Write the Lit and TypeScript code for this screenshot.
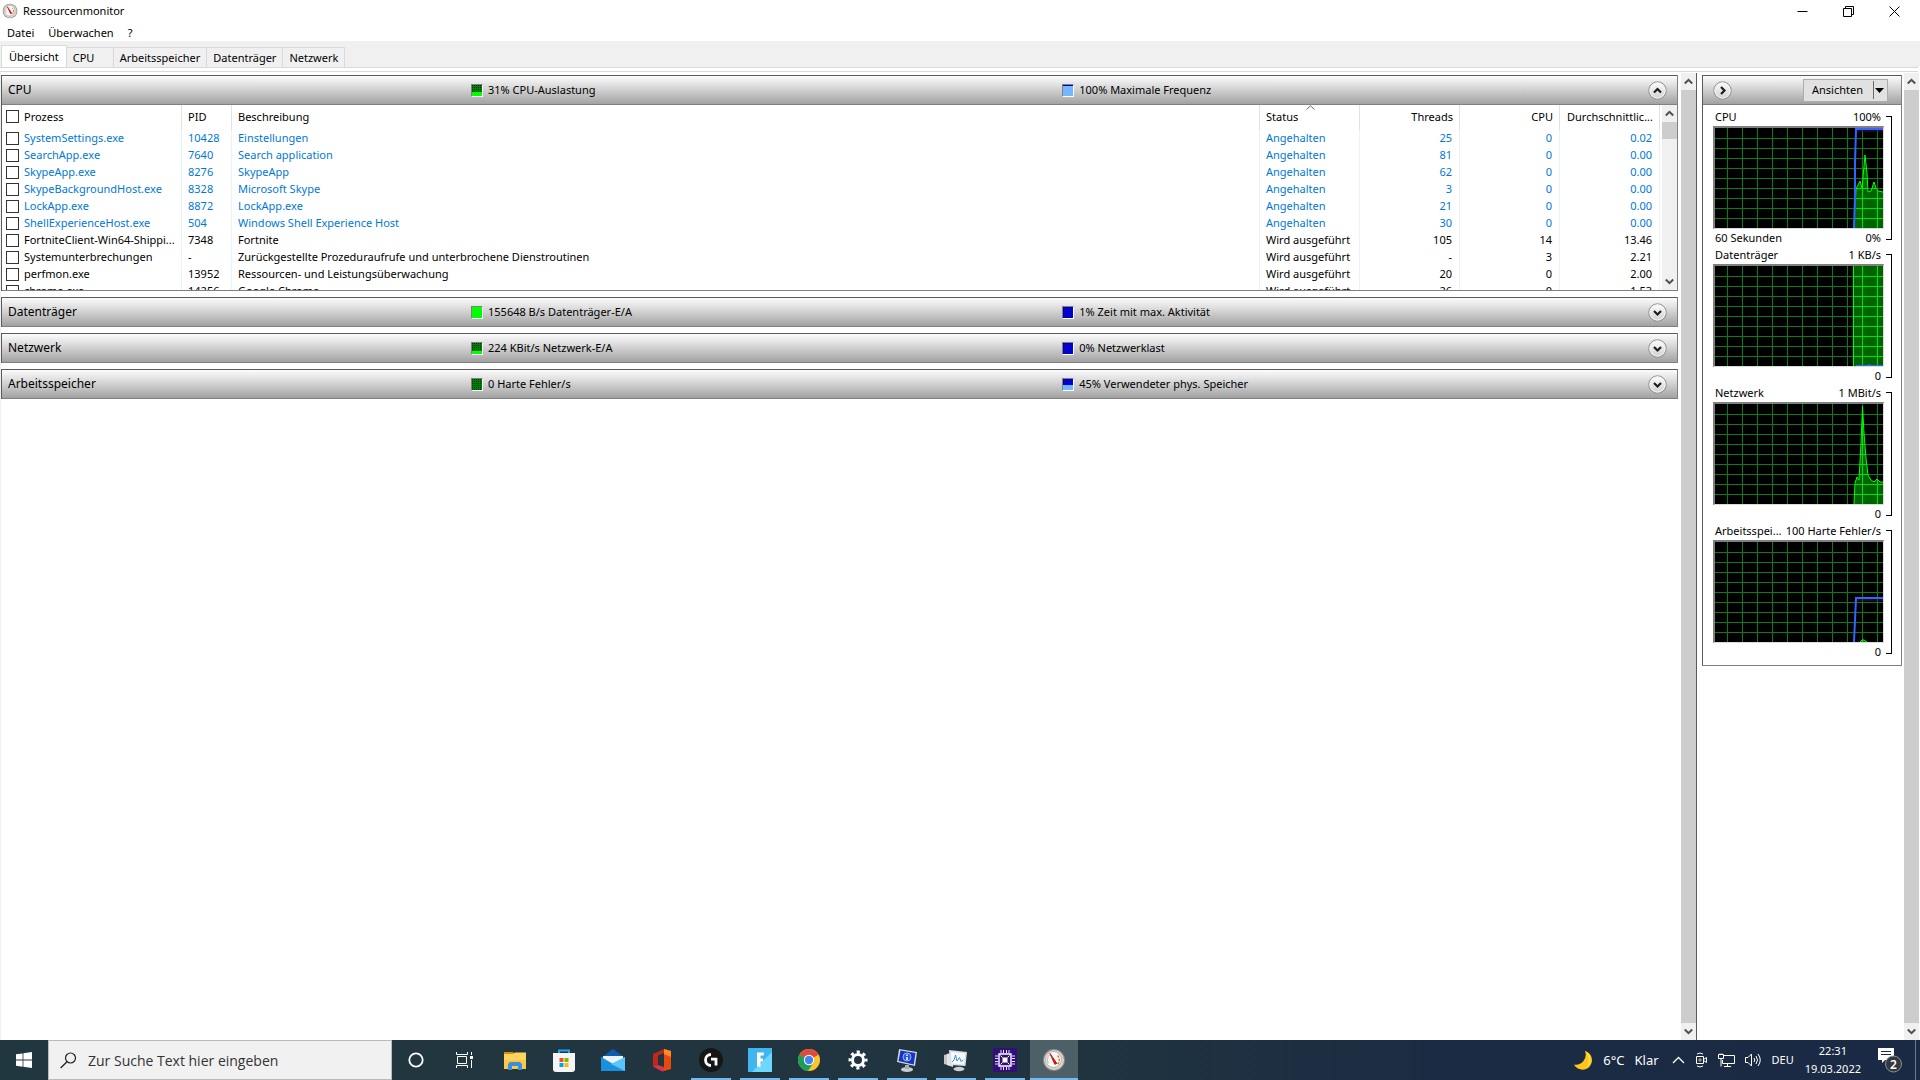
import { LitElement, html, css, svg, nothing } from "lit";
import { customElement, property } from "lit/decorators.js";
import { classMap } from "lit/directives/class-map.js";

interface Proc {
  name: string;
  pid: string;
  desc: string;
  state: string;
  threads: string;
  cpu: string;
  avg: string;
}

const SUSPENDED = "Angehalten";
const RUNNING = "Wird ausgeführt";

const proc = (name: string, pid: string, desc: string, state: string, threads: string, cpu: string, avg: string): Proc =>
  ({ name, pid, desc, state, threads, cpu, avg });

const PROCESSES: Proc[] = [
  proc("SystemSettings.exe", "10428", "Einstellungen", SUSPENDED, "25", "0", "0.02"),
  proc("SearchApp.exe", "7640", "Search application", SUSPENDED, "81", "0", "0.00"),
  proc("SkypeApp.exe", "8276", "SkypeApp", SUSPENDED, "62", "0", "0.00"),
  proc("SkypeBackgroundHost.exe", "8328", "Microsoft Skype", SUSPENDED, "3", "0", "0.00"),
  proc("LockApp.exe", "8872", "LockApp.exe", SUSPENDED, "21", "0", "0.00"),
  proc("ShellExperienceHost.exe", "504", "Windows Shell Experience Host", SUSPENDED, "30", "0", "0.00"),
  proc("FortniteClient-Win64-Shippi...", "7348", "Fortnite", RUNNING, "105", "14", "13.46"),
  proc("Systemunterbrechungen", "-", "Zurückgestellte Prozeduraufrufe und unterbrochene Dienstroutinen", RUNNING, "-", "3", "2.21"),
  proc("perfmon.exe", "13952", "Ressourcen- und Leistungsüberwachung", RUNNING, "20", "0", "2.00"),
  proc("chrome.exe", "14256", "Google Chrome", RUNNING, "26", "0", "1.53"),
];

const gaugeIcon = (size: number) => html`<svg width=${size} height=${size} viewBox="0 0 24 24" aria-hidden="true">
  <circle cx="12" cy="12" r="11" fill="#8d8983"></circle>
  <circle cx="12" cy="12" r="10" fill="#d9d5cf"></circle>
  <circle cx="11.500" cy="11.500" r="8" fill="#fbfaf8" stroke="#b5afa8" stroke-width="1"></circle>
  <path d="M6.500 15.500A6.500 6.500 0 0 1 8 6.500" fill="none" stroke="#c9c4bd" stroke-width="1.500"></path>
  <path d="M15.500 7.500A6.500 6.500 0 0 1 15.500 16.500" fill="none" stroke="#e0762b" stroke-width="1.500" stroke-dasharray="2.500 1"></path>
  <path d="M8 5.500L14.800 15.400L12.800 16.300Z" fill="#c81414" stroke="#c81414" stroke-width="1"></path>
</svg>`;

const chevron = (dir: "up" | "down") => html`<svg width="9" height="7" viewBox="0 0 9 7" aria-hidden="true">
  <path d=${dir === "up" ? "M0.800 5.500L4.500 1.800L8.200 5.500" : "M0.800 1.500L4.500 5.200L8.200 1.500"} fill="none" stroke="#505050" stroke-width="2"></path>
</svg>`;

/** Vertical scroll bar with arrow buttons and a thumb. */
@customElement("scroll-bar")
export class ScrollBar extends LitElement {
  @property() size: "full" | "small" = "full";

  static styles = css`
    :host { display: flex; flex-direction: column; flex: none; width: 15px; background: #f0f0f0; }
    button { flex: none; display: grid; place-items: center; height: 17px; width: 100%; padding: 0; border: 0; background: none; }
    .thumb { background: #cdcdcd; flex: 1; }
    .thumb.small { flex: none; height: 17px; }
    .space { flex: 1; }
  `;

  render() {
    const small = this.size === "small";
    return html`
      <button aria-label="Nach oben">${chevron("up")}</button>
      <div class=${classMap({ thumb: true, small })}></div>
      ${small ? html`<div class="space"></div>` : nothing}
      <button aria-label="Nach unten">${chevron("down")}</button>
    `;
  }
}

/** Round bevelled button used in section headers. */
@customElement("round-button")
export class RoundButton extends LitElement {
  @property() dir: "up" | "down" | "right" = "down";
  @property() name = "";

  static styles = css`
    :host { display: flex; flex: none; }
    button { display: flex; padding: 0; border: 0; background: none; }
  `;

  render() {
    const d = {
      up: "M6 11.500L9.500 8L13 11.500",
      down: "M6 8L9.500 11.500L13 8",
      right: "M8 6L11.500 9.500L8 13",
    }[this.dir];
    return html`<button aria-label=${this.name}>
      <svg width="19" height="19" viewBox="0 0 19 19" aria-hidden="true">
        <defs><linearGradient id="g" x1="0" y1="0" x2="0" y2="1">
          <stop offset="0" stop-color="#ffffff"></stop><stop offset="1" stop-color="#cfcfcf"></stop>
        </linearGradient></defs>
        <circle cx="9.500" cy="9.500" r="8.700" fill="url(#g)" stroke="#8a8a8a"></circle>
        <circle cx="9.500" cy="9.500" r="7.600" fill="none" stroke="#f4f4f4"></circle>
        <path d=${d} fill="none" stroke="#1e1e1e" stroke-width="2.200"></path>
      </svg>
    </button>`;
  }
}

/** Grey gradient bar with two small meters. */
@customElement("section-bar")
export class SectionBar extends LitElement {
  @property() name = "";
  @property() first = "";
  @property({ type: Number }) firstFill = 0;
  @property() second = "";
  @property({ type: Number }) secondFill = 0;
  @property({ type: Boolean }) open = false;

  static styles = css`
    :host {
      display: grid; grid-template-columns: 280fr 353fr 367fr; align-items: center; height: 28px;
      border-top: 1px solid #5a5a5a; border-bottom: 1px solid #808080;
      background: linear-gradient(#fcfcfc, #dedede 35%, #a2a2a2);
    }
    h2 { margin: 0; padding-left: 6px; font-size: 12px; font-weight: 400; line-height: 20px; }
    .stat { display: flex; align-items: center; gap: 5px; line-height: 16px; }
    .last { display: flex; justify-content: space-between; align-items: center; padding-right: 10px; }
    .meter {
      display: flex; flex-direction: column; justify-content: flex-end; width: 10px; height: 11px;
      border: 1px solid #fff; border-top-color: #808080; border-left-color: #808080;
      background: conic-gradient(at 1px 1px, transparent 75%, #003000 0) 0 0 / 2px 2px #008000;
    }
    .meter.blue { background: conic-gradient(at 1px 1px, transparent 75%, #000060 0) 0 0 / 2px 2px #0000ee; }
    .fill { background: #00ff00; }
    .blue .fill { background: #74b6ff; }
  `;

  private meter(value: number, blue: boolean) {
    return html`<div class=${classMap({ meter: true, blue })}><div class="fill" style="height:${value}%"></div></div>`;
  }

  render() {
    return html`
      <h2>${this.name}</h2>
      <div class="stat">${this.meter(this.firstFill, false)}<span>${this.first}</span></div>
      <div class="last">
        <div class="stat">${this.meter(this.secondFill, true)}<span>${this.second}</span></div>
        <round-button dir=${this.open ? "up" : "down"} name=${this.name}></round-button>
      </div>
    `;
  }
}

/** Scrolling history chart with a green area and a blue line. */
@customElement("history-graph")
export class HistoryGraph extends LitElement {
  @property() name = "";
  @property() max = "";
  @property() span = "";
  @property() min = "0";
  @property() area = "";
  @property() line = "";

  static styles = css`
    :host { display: flex; gap: 2px; padding: 0 9px 1px 10px; }
    .col { flex: 1; min-width: 0; display: flex; flex-direction: column; gap: 1px; }
    .row { display: flex; justify-content: space-between; padding: 0 3px 0 2px; line-height: 16px; white-space: nowrap; }
    .plot { border: 2px solid #808080; border-width: 2px 1px 1px 2px; border-right-color: #dcdcdc; border-bottom-color: #dcdcdc; background: #000; }
    svg { display: block; width: 100%; height: 100px; }
    .bracket { width: 5px; margin: 7px 0 6px; border: 1px solid #000; border-left: 0; }
  `;

  private grid(color: string) {
    const xs = Array.from({ length: 11 }, (_, i) => 12 + i * 15);
    const ys = Array.from({ length: 9 }, (_, i) => 10 + i * 10);
    return svg`<path stroke=${color} stroke-width="1" fill="none" shape-rendering="crispEdges"
      d=${xs.map((x) => `M${x}.5 0V100`).join("") + ys.map((y) => `M0 ${y}.5H168`).join("")}></path>`;
  }

  render() {
    const closed = this.area ? `${this.area} 169,101 138,101` : "";
    return html`
      <div class="col">
        <div class="row"><span>${this.name}</span><span>${this.max}</span></div>
        <div class="plot">
          <svg viewBox="0 0 168 100" preserveAspectRatio="none" role="img" aria-label=${this.name}>
            <defs><clipPath id="c"><polygon points=${closed}></polygon></clipPath></defs>
            ${this.grid("#0a7d1a")}
            <g clip-path="url(#c)"><rect width="168" height="100" fill="#006400"></rect>${this.grid("#00e010")}</g>
            <polyline points=${this.area} fill="none" stroke="#00ff00"></polyline>
            <g transform="translate(0 2)"><polyline points=${this.line} fill="none" stroke="#40104c"></polyline></g>
            <polyline points=${this.line} fill="none" stroke="#2f66ff" stroke-width="2"></polyline>
          </svg>
        </div>
        <div class="row"><span>${this.span}</span><span>${this.min}</span></div>
      </div>
      <div class="bracket"></div>
    `;
  }
}

const TASKS: { name: string; run?: boolean; art: unknown }[] = [
  { name: "Explorer", art: svg`
    <path d="M1 4h9l2 2h-11z" fill="#d98e00"></path><path d="M1 6h9l2-1.500h11v16h-22z" fill="#ffd45e"></path>
    <path d="M1 12h22v9h-22z" fill="#fbc74a"></path><path d="M5 22v-6l2-2h10l2 2v6h-4v-4h-6v4z" fill="#3a8fdc"></path>` },
  { name: "Store", art: svg`
    <path d="M7 6V2.500h10V6" fill="none" stroke="#22a7f0" stroke-width="2"></path>
    <path d="M1 5h22v16a3 3 0 0 1-3 3h-16a3 3 0 0 1-3-3z" fill="#f5f5f5"></path>
    <path d="M7.500 10h4v4h-4z" fill="#f25022"></path><path d="M12.500 10h4v4h-4z" fill="#7fba00"></path>
    <path d="M7.500 15h4v4h-4z" fill="#00a4ef"></path><path d="M12.500 15h4v4h-4z" fill="#ffb900"></path>` },
  { name: "Mail", art: svg`
    <path d="M0 10L12 1L24 10z" fill="#0c5fb0"></path><path d="M2 8h20v8h-20z" fill="#eef3f7"></path>
    <path d="M0 9L13 17L24 9V23H0z" fill="#2ba4ea"></path><path d="M0 9L24 23H0z" fill="#1b8fe0"></path><path d="M24 9V23L10 16z" fill="#55c8f7"></path>` },
  { name: "Office", art: svg`
    <path d="M3 6L14 1V5L8 7.500V17L4 18.500H3z" fill="#c22818"></path><path d="M14 1L21 3V21L14 23z" fill="#e64a0c"></path>
    <path d="M14 1L21 3V9L14 6z" fill="#ff8b22"></path><path d="M3 18.500L8 17L14 19V23L12 23.500z" fill="#e0304a"></path>` },
  { name: "Logitech G HUB", run: true, art: svg`
    <circle cx="12" cy="12" r="12" fill="#161616"></circle>
    <path d="M12 6.500A5.500 5.500 0 0 0 12 17.500" fill="none" stroke="#fff" stroke-width="2.800"></path>
    <path d="M12 11.200H17V17.500" fill="none" stroke="#fff" stroke-width="2.800"></path>` },
  { name: "Fortnite", run: true, art: svg`
    <path d="M0 0h24v24h-24z" fill="#3fb6ee"></path><path d="M24 4v20h-20z" fill="#6cd8fb"></path>
    <path d="M9 4.500h7l-0.500 3h-3v3h2.500v3h-2.500v5.500l-3.500-0.500z" fill="#fff"></path>` },
  { name: "Chrome", run: true, art: svg`
    <circle cx="12" cy="12" r="11" fill="#fbc62c"></circle>
    <path d="M12 12L2.500 6.500A11 11 0 0 1 21.500 6.500z" fill="#dd4b3e"></path><path d="M2.500 6.500A11 11 0 0 0 11 23L16.500 14.500L12 12z" fill="#1b9d59"></path>
    <path d="M2.500 6.500H21.500L12 12z" fill="#dd4b3e"></path>
    <circle cx="12" cy="12" r="5.200" fill="#fff"></circle><circle cx="12" cy="12" r="4.200" fill="#4285f4"></circle>` },
  { name: "Einstellungen", run: true, art: svg`
    <circle cx="12" cy="12" r="8" fill="none" stroke="#fff" stroke-width="3" stroke-dasharray="3.100 3.183" stroke-dashoffset="1.550"></circle>
    <circle cx="12" cy="12" r="5.500" fill="none" stroke="#fff" stroke-width="3"></circle>` },
  { name: "Systeminformationen", run: true, art: svg`
    <ellipse cx="12" cy="21.500" rx="6" ry="2.500" fill="#c9ccd0"></ellipse><path d="M10 17h4v4h-4z" fill="#a9adb2"></path>
    <path d="M4 1L22 4L20 18L2 14z" fill="#d5d8dc"></path><path d="M5.500 2.500L20.500 5L18.700 16.500L3.500 13z" fill="#1434c8"></path>
    <circle cx="12" cy="9" r="4" fill="#2c56dd" stroke="#9db4f5"></circle><path d="M12 6.500v1.500M12 9v3" stroke="#fff" stroke-width="1.500"></path>` },
  { name: "Leistungsüberwachung", run: true, art: svg`
    <path d="M0 7L7 5V18L0 16z" fill="#c3c7c9"></path><path d="M3 6L9 5V19L3 17z" fill="#e3e5e6"></path>
    <ellipse cx="15" cy="21" rx="5.500" ry="2.200" fill="#cdd0d3"></ellipse>
    <path d="M5 2L23 4L21.500 18L6 17z" fill="#dadddf"></path><path d="M7 4L21.300 5.500L20 16.500L7.500 15.500z" fill="#f7fafc"></path>
    <path d="M8 14L10 12L11.500 7L13 13L15.500 9.500L17 13.500L19.500 12" fill="none" stroke="#3b93c8"></path>` },
  { name: "CPU-Z", run: true, art: svg`
    <path d="M0 0h24v24h-24z" fill="#321078"></path>
    <path d="M6 6h12v12h-12z" fill="none" stroke="#fff" stroke-width="1.400"></path><path d="M9.500 9.500h5v5h-5z" fill="#fff"></path>
    <path d="M8 5V2M10.500 5V2M13.500 5V2M16 5V2M8 22V19M10.500 22V19M13.500 22V19M16 22V19M2 8H5M2 10.500H5M2 13.500H5M2 16H5M19 8H22M19 10.500H22M19 13.500H22M19 16H22" stroke="#e8dcff"></path>
    <path d="M7.500 7.500L9.500 9.500M16.500 7.500L14.500 9.500M7.500 16.500L9.500 14.500M16.500 16.500L14.500 14.500" stroke="#fff"></path>` },
];

@customElement("task-bar")
export class TaskBar extends LitElement {
  static styles = css`
    :host { display: flex; height: 40px; color: #fff; background: linear-gradient(90deg, #21373f, #20343f 55%, #1b2b43 75%, #1a2a44); }
    button { display: flex; align-items: center; justify-content: center; padding: 0; border: 0; background: none; color: inherit; font: inherit; flex: none; }
    .cell { width: 48px; height: 40px; }
    .search { display: flex; align-items: center; gap: 11px; width: 344px; box-sizing: border-box; padding-left: 11px; border: 1px solid #b9b9b9; background: #f1f1f1; }
    .search input { flex: 1; min-width: 0; padding: 2px 0 0; border: 0; outline: 0; background: none; font: 14px/24px "Open Sans", "Noto Sans", sans-serif; color: #333; }
    .search input::placeholder { color: #333; opacity: 1; }
    .tasks { display: flex; gap: 1px; padding-left: 3px; flex: 1; min-width: 0; }
    .task { width: 48px; height: 40px; box-sizing: border-box; background: linear-gradient(#76b9ed, #76b9ed) center bottom / 0 2px no-repeat; }
    .task.run { background-size: 40px 2px; }
    .task.active { background-color: #4d6068; background-size: 48px 2px; }
    .tray { display: flex; align-items: center; gap: 10px; }
    .weather { gap: 10px; font-size: 13px; line-height: 20px; padding-right: 3px; }
    .clock { flex-direction: column; line-height: 18px; padding: 0 4px 0 1px; }
    .peek { width: 5px; height: 40px; box-sizing: border-box; border-left: 1px solid #6f7b8b; }
    .notes { width: 30px; }
  `;

  render() {
    return html`
      <button class="cell" aria-label="Start"><svg width="16" height="16" viewBox="0 0 16 16">
        <path d="M0 2.300L6.600 1.400V7.600H0zM7.400 1.300L16 0V7.600H7.400zM0 8.400H6.600V14.700L0 13.800zM7.400 8.400H16V16L7.400 14.800z" fill="#fff"></path></svg></button>
      <label class="search">
        <svg width="17" height="17" viewBox="0 0 17 17" aria-hidden="true"><circle cx="10.500" cy="6" r="5" fill="none" stroke="#222" stroke-width="1.200"></circle><path d="M7 9.700L0.600 16" stroke="#222" stroke-width="1.300"></path></svg>
        <input type="text" placeholder="Zur Suche Text hier eingeben" aria-label="Suche" />
      </label>
      <button class="cell" aria-label="Cortana"><svg width="16" height="16" viewBox="0 0 16 16"><circle cx="8" cy="8" r="6.700" fill="none" stroke="#fff" stroke-width="1.800"></circle></svg></button>
      <button class="cell" aria-label="Aktive Anwendungen"><svg width="17" height="17" viewBox="0 0 17 17">
        <path d="M0.500 0V2.500H11.500V0M0.500 16V13.500H11.500V16M1.500 4.500H10.500V11.500H1.500zM15.500 0V3M15.500 8V16" fill="none" stroke="#fff"></path><path d="M14 4h3v3h-3z" fill="#fff"></path></svg></button>
      <nav class="tasks" aria-label="Anwendungen">
        ${TASKS.map((t) => html`<button class=${classMap({ task: true, run: !!t.run })} aria-label=${t.name}>
          <svg width="24" height="24" viewBox="0 0 24 24">${t.art}</svg></button>`)}
        <button class="task active" aria-label="Ressourcenmonitor">${gaugeIcon(24)}</button>
      </nav>
      <div class="tray">
        <button class="weather">
          <svg width="20" height="20" viewBox="0 0 20 20" aria-hidden="true"><path d="M12 1A9.500 9.500 0 1 1 1 14.500A10 10 0 0 0 12 1z" fill="#ffc61a"></path><path d="M12 1A9.500 9.500 0 0 1 14 17A13 13 0 0 0 12 1z" fill="#ffe14a"></path></svg>
          <span>6°C</span><span>Klar</span>
        </button>
        <button aria-label="Ausgeblendete Symbole"><svg width="13" height="8" viewBox="0 0 13 8"><path d="M1 7L6.500 1.500L12 7" fill="none" stroke="#fff" stroke-width="1.300"></path></svg></button>
        <button aria-label="Besprechung"><svg width="13" height="16" viewBox="0 0 13 16"><path d="M1.500 4.500H8.500V11.500H1.500zM8.500 7.500L11.500 5.500V10.500L8.500 8.500M2 2Q5 0 8 2M2 14Q5 16 8 14" fill="none" stroke="#fff"></path><path d="M4 7h2v2h-2z" fill="none" stroke="#aab4c2"></path></svg></button>
        <button aria-label="Netzwerk"><svg width="17" height="15" viewBox="0 0 17 15"><path d="M6 2.500H16.500V10.500H4.500V7M9.500 10.500V13.500M6 13.500H13M0.500 1.500H5.500V5.500H0.500zM3 5.500V13.500M2 0.500V2M4 0.500V2" fill="none" stroke="#fff"></path></svg></button>
        <button aria-label="Lautstärke"><svg width="17" height="14" viewBox="0 0 17 14"><path d="M0.500 4.500H3L6.500 1V13L3 9.500H0.500zM9 5Q10.500 7 9 9M11 3Q14 7 11 11M13 1Q17.500 7 13 13" fill="none" stroke="#fff"></path></svg></button>
        <button>DEU</button>
        <button class="clock"><span>22:31</span><span>19.03.2022</span></button>
        <button class="notes" aria-label="Benachrichtigungen"><svg width="26" height="26" viewBox="0 0 26 26">
          <path d="M1 1H17V13H8L5 16V13H1z" fill="#fff"></path><path d="M4 4.500H14M4 7.500H14" stroke="#1b2b43"></path>
          <circle cx="16.500" cy="17" r="8" fill="#33383f" stroke="#8b9198"></circle>
          <text x="16.500" y="21.500" text-anchor="middle" font-size="12" font-weight="600" fill="#fff">2</text></svg></button>
        <div class="peek"></div>
      </div>
    `;
  }
}

@customElement("app-root")
export class AppRoot extends LitElement {
  static styles = css`
    :host { display: flex; flex-direction: column; height: 100vh; overflow: hidden; background: #fff; color: #000; font: 11px/16px "Noto Sans", "Open Sans", sans-serif; }
    button { padding: 0; border: 0; background: none; color: inherit; font: inherit; }
    .title { display: flex; align-items: center; gap: 5px; height: 22px; padding: 0 3px 0 2px; flex: none; }
    .title h1 { flex: 1; margin: 0; font-size: 11px; font-weight: 400; line-height: 22px; }
    .title svg { display: block; }
    .title button { width: 46px; height: 20px; display: grid; place-items: center; }
    .wins { display: flex; }
    .menu { display: flex; gap: 14px; height: 19px; align-items: center; padding: 2px 7px 0; flex: none; box-sizing: border-box; line-height: 17px; }
    .menu a { color: inherit; text-decoration: none; }
    .tabs { display: flex; align-items: flex-end; height: 26px; padding-left: 1px; background: #f0f0f0; flex: none; }
    .tab { height: 20px; box-sizing: border-box; padding: 0 6px; border: 1px solid #d9d9d9; border-left: 0; border-bottom: 0; text-align: left; line-height: 19px; }
    .tab.narrow { width: 47px; }
    .tab.on { height: 22px; padding: 0 7px 1px; background: #fff; border-left: 1px solid #d9d9d9; }
    .edge { height: 5px; flex: none; box-sizing: border-box; border-top: 1px solid #d9d9d9; border-bottom: 1px solid #d9d9d9; margin-right: 2px; }
    .main { flex: 1; min-height: 0; display: flex; border-left: 1px solid #f0f0f0; padding: 1px 1px 0 0; }
    .left { flex: 1; min-width: 0; display: flex; flex-direction: column; gap: 6px; padding: 2px 3px 0 0; }
    .panel { border: 1px solid #5a5a5a; border-top: 0; border-right-color: #808080; border-bottom: 0; }
    .list { display: flex; height: 185px; overflow: hidden; border-bottom: 1px solid #808080; }
    table { flex: 1; min-width: 0; table-layout: fixed; border-collapse: separate; border-spacing: 0; height: 0; margin-right: 2px; }
    .c-name { width: 180px; }
    .c-pid { width: 50px; }
    .c-num { width: 100px; }
    th, td { padding: 0 0 0 6px; border-right: 1px solid #e9f2fb; text-align: left; font-weight: 400; white-space: nowrap; overflow: hidden; }
    td { height: 17px; line-height: 15px; vertical-align: top; }
    th { height: 23px; padding-bottom: 2px; line-height: 17px; border-right-color: #e2e2e2; position: relative; }
    td.num { text-align: right; padding-right: 7px; }
    th.num { text-align: right; padding-right: 6px; }
    th:first-child, td:first-child { padding-left: 4px; }
    .pick { display: flex; align-items: center; gap: 5px; height: 17px; }
    td .pick span { align-self: flex-start; }
    .pick input { appearance: none; flex: none; width: 13px; height: 13px; margin: 0; border: 1px solid #333; background: #fff; }
    .susp td { color: #0078d7; }
    .sort { position: absolute; top: 0; left: 50%; margin-left: -4px; }
    .rule { width: 1px; background: #5a5a5a; flex: none; }
    .right { flex: none; width: 207px; padding: 2px 2px 0 5px; box-sizing: border-box; }
    .views { border: 1px solid #808080; border-top-color: #5a5a5a; border-left-color: #5a5a5a; padding-bottom: 4px; }
    .head { display: flex; align-items: center; justify-content: space-between; height: 28px; padding: 0 13px 0 10px; margin-bottom: 4px; border-bottom: 1px solid #808080; background: linear-gradient(#fcfcfc, #dedede 35%, #a2a2a2); }
    .split { display: flex; align-items: center; height: 23px; box-sizing: border-box; border: 1px solid #adadad; background: #e1e1e1; }
    .split .text { padding: 0 10px 0 8px; }
    .split .arrow { display: flex; align-items: center; height: 18px; padding: 0 3px 0 1px; border-left: 1px solid #6a6a6a; }
  `;

  private row(p: Proc) {
    return html`<tr class=${classMap({ susp: p.state === SUSPENDED })}>
      <td><label class="pick"><input type="checkbox" /><span>${p.name}</span></label></td>
      <td>${p.pid}</td><td>${p.desc}</td><td>${p.state}</td>
      <td class="num">${p.threads}</td><td class="num">${p.cpu}</td><td class="num">${p.avg}</td>
    </tr>`;
  }

  render() {
    return html`
      <header class="title">
        ${gaugeIcon(16)}
        <h1>Ressourcenmonitor</h1>
        <div class="wins">
          <button aria-label="Minimieren"><svg width="11" height="11"><path d="M0.500 5.500H10.500" stroke="#000"></path></svg></button>
          <button aria-label="Verkleinern"><svg width="11" height="11"><path d="M0.500 2.500H8.500V10.500H0.500zM2.500 2.500V0.500H10.500V8.500H8.500" fill="none" stroke="#000"></path></svg></button>
          <button aria-label="Schließen"><svg width="11" height="11"><path d="M0.500 0.500L10.500 10.500M10.500 0.500L0.500 10.500" stroke="#000"></path></svg></button>
        </div>
      </header>
      <nav class="menu"><a href="#datei">Datei</a><a href="#ueberwachen">Überwachen</a><a href="#hilfe">?</a></nav>
      <div class="tabs" role="tablist">
        <button class="tab on" role="tab">Übersicht</button>
        <button class="tab narrow" role="tab">CPU</button>
        <button class="tab" role="tab">Arbeitsspeicher</button>
        <button class="tab" role="tab">Datenträger</button>
        <button class="tab" role="tab">Netzwerk</button>
      </div>
      <div class="edge"></div>
      <main class="main">
        <div class="left">
          <section class="panel">
            <section-bar name="CPU" first="31% CPU-Auslastung" firstFill="36" second="100% Maximale Frequenz" secondFill="91" open></section-bar>
            <div class="list">
              <table>
                <colgroup><col class="c-name" /><col class="c-pid" /><col /><col class="c-num" /><col class="c-num" /><col class="c-num" /><col class="c-num" /></colgroup>
                <thead><tr>
                  <th><label class="pick"><input type="checkbox" /><span>Prozess</span></label></th>
                  <th>PID</th><th>Beschreibung</th>
                  <th>Status<svg class="sort" width="9" height="5" viewBox="0 0 9 5"><path d="M0.500 4.500L4.500 0.800L8.500 4.500" fill="none" stroke="#6a6a6a"></path></svg></th>
                  <th class="num">Threads</th><th class="num">CPU</th><th class="num">Durchschnittlic...</th>
                </tr></thead>
                <tbody>${PROCESSES.map((p) => this.row(p))}</tbody>
              </table>
              <scroll-bar size="small"></scroll-bar>
            </div>
          </section>
          <section class="panel"><section-bar name="Datenträger" first="155648 B/s Datenträger-E/A" firstFill="100" second="1% Zeit mit max. Aktivität" secondFill="0"></section-bar></section>
          <section class="panel"><section-bar name="Netzwerk" first="224 KBit/s Netzwerk-E/A" firstFill="27" second="0% Netzwerklast" secondFill="0"></section-bar></section>
          <section class="panel"><section-bar name="Arbeitsspeicher" first="0 Harte Fehler/s" firstFill="0" second="45% Verwendeter phys. Speicher" secondFill="45"></section-bar></section>
        </div>
        <scroll-bar></scroll-bar>
        <div class="rule"></div>
        <aside class="right">
          <div class="views">
            <div class="head">
              <round-button dir="right" name="Ausblenden"></round-button>
              <div class="split">
                <button class="text">Ansichten</button>
                <button class="arrow" aria-label="Ansicht wählen"><svg width="9" height="5"><path d="M0 0H9L4.500 5z"></path></svg></button>
              </div>
            </div>
            <history-graph name="CPU" max="100%" span="60 Sekunden" min="0%"
              area="140,80 141,61 145,53 147,60 150,27 152,45 153,64 156,63 159,54 161,60 163,63 168,64"
              line="139,100 140,68 140,35 141,1 168,1"></history-graph>
            <history-graph name="Datenträger" max="1 KB/s"
              area="138.500,100 138.500,-1 169,-1" line="141,100 152,100 154,99 156,100 168,100"></history-graph>
            <history-graph name="Netzwerk" max="1 MBit/s"
              area="139,100 140,79 142,73 144,76 146,39 147.500,2 149,29 151,54 153,71 156,76 159,78 162,75 165,78 168,78"></history-graph>
            <history-graph name="Arbeitsspei..." max="100 Harte Fehler/s"
              area="145,100 147,98 149,98 152,100" line="139,100 141,56 168,56"></history-graph>
          </div>
        </aside>
        <scroll-bar></scroll-bar>
      </main>
      <task-bar></task-bar>
    `;
  }
}
